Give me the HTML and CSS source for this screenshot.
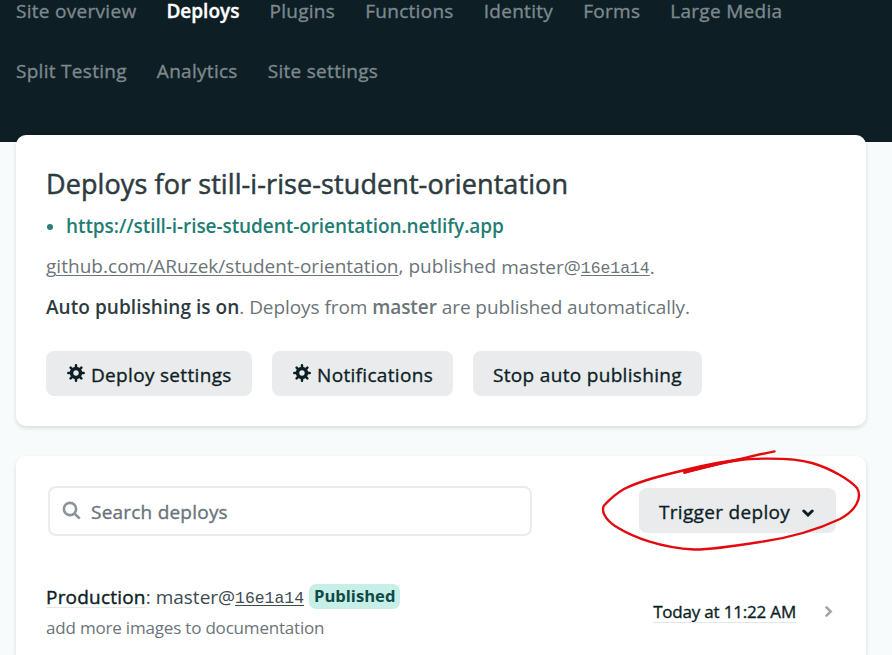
FILE: index.html
```
<!DOCTYPE html>
<html lang="en">
<head>
<meta charset="utf-8">
<title>Deploys</title>
<link rel="stylesheet" href="styles.css">
</head>
<body>
<header class="header">
  <nav class="nav">
    <div class="nav-row"><a>Site overview</a><a class="active">Deploys</a><a>Plugins</a><a>Functions</a><a>Identity</a><a>Forms</a><a>Large Media</a></div>
    <div class="nav-row"><a>Split Testing</a><a>Analytics</a><a>Site settings</a></div>
  </nav>
</header>
<main class="main">
  <section class="card summary">
    <h1 class="title">Deploys for still-i-rise-student-orientation</h1>
    <div class="site-link"><span class="dot"></span><a>https://still-i-rise-student-orientation.netlify.app</a></div>
    <p class="line repo"><a class="repo-link">github.com/ARuzek/student-orientation</a>, published <span class="branch">master@<span class="sha">16e1a14</span>.</span></p>
    <p class="line auto"><strong class="dark">Auto publishing is on</strong>. Deploys from <strong>master</strong> are published automatically.</p>
    <div class="buttons">
      <button class="btn settings"><svg class="gear" viewBox="-9 -9 18 18"><use href="#gear"/></svg><span>Deploy settings</span></button>
      <button class="btn notify"><svg class="gear" viewBox="-9 -9 18 18"><use href="#gear"/></svg><span>Notifications</span></button>
      <button class="btn stop"><span>Stop auto publishing</span></button>
    </div>
  </section>
  <section class="card list">
    <div class="toolbar">
      <div class="search">
        <svg class="glass" viewBox="0 0 20 20"><circle cx="8" cy="8" r="6.1"/><path d="M12.5 12.5L17.7 17.7"/></svg>
        <span>Search deploys</span>
      </div>
      <div class="trigger-wrap">
        <button class="btn trigger"><span>Trigger deploy</span><svg class="caret" viewBox="0 0 12 8"><path d="M1.8 2L6 6L10.2 2"/></svg></button>
        <svg class="mark" viewBox="590 440 302 120">
          <path d="M684.500 472.500C712 466 748 456.500 774.500 451.400"/>
          <path d="M684.500 472.500C715 464 735 460 750 459C775 458 800 459.500 812 463C832 469 850 480 857 488C863 498 855 511 840 519C819 529 795 537 760 542C735 546 710 549.700 694 549.500C662 548 634 538 615 526C605 519 601 511 604 505.500C611 498 617 493 624 489C640 481 660 476 685 470C705 465 722 461.500 740 459.500"/>
        </svg>
      </div>
    </div>
    <div class="deploy">
      <div class="deploy-info">
        <div class="deploy-title"><span class="prod"><b>Production</b>:</span><span class="branch">master@<span class="sha">16e1a14</span></span><span class="badge">Published</span></div>
        <div class="message">add more images to documentation</div>
      </div>
      <div class="deploy-time"><span>Today at 11:22 AM</span><svg class="chevron" viewBox="0 0 8 12"><path d="M1.500 1.500L6 6L1.500 10.500"/></svg></div>
    </div>
  </section>
</main>
<svg class="defs" width="0" height="0"><defs>
  <g id="gear">
    <path d="M0-7.700V7.700M-7.700 0H7.700M-5.400-5.400L5.400 5.400M5.400-5.400L-5.400 5.400" stroke="#0e1e25" stroke-width="2.500" stroke-linecap="round"/>
    <circle r="6.200" fill="#0e1e25"/><circle r="2.700" fill="#e9ebed"/>
  </g>
</defs></svg>
</body>
</html>
```
FILE: styles.css
```
* { box-sizing: border-box; }
body { margin: 0; height: 655px; overflow: hidden; background: #f8fbfc; font-family: "Open Sans", "Noto Sans", sans-serif; font-size: 19px; color: #6b7479; }
.header { height: 142px; background: #0e1e25; }
.nav { padding-left: 16px; }
.nav-row { display: flex; gap: 30px; height: 60px; line-height: 22px; letter-spacing: .29px; -webkit-text-stroke: .35px currentColor; color: #7d898d; white-space: nowrap; }
.nav-row .active { color: #fff; font-weight: 600; letter-spacing: 0; }
.main { margin-top: -7px; padding: 0 26px 0 16px; display: flex; flex-direction: column; gap: 30px; position: relative; }
.card { background: #fff; border-radius: 10px; box-shadow: 0 2px 4px rgba(14, 30, 37, .14); padding: 30px 30px 0; white-space: nowrap; }
.summary { height: 291px; }
.title { margin: 0 0 3px; font-size: 27px; line-height: 38px; font-weight: 400; letter-spacing: .09px; -webkit-text-stroke: .5px currentColor; color: #2d3b41; }
.site-link { display: flex; align-items: center; gap: 13px; height: 41px; line-height: 41px; color: #1f7d74; font-weight: 600; letter-spacing: -.08px; }
.dot { width: 6px; height: 6px; margin-left: 1px; border-radius: 50%; background: #2d7d78; }
.line { margin: 0; height: 41px; line-height: 41px; }
.repo { letter-spacing: .03px; margin-top: -1px; }
.auto { letter-spacing: -.07px; }
.repo-link { text-decoration: underline; text-decoration-thickness: 1px; text-underline-offset: 2px; }
.line strong { font-weight: 600; }
.auto .dark { color: #2d3b41; letter-spacing: .05px; }
.branch { position: relative; top: 1px; }
.sha { font-family: "Liberation Mono", monospace; font-size: 16.4px; letter-spacing: 0; text-decoration: underline; text-decoration-thickness: 1px; text-underline-offset: 2px; position: relative; top: -1px; }
.buttons { display: flex; gap: 20px; margin-top: 23px; }
.btn { display: flex; align-items: center; height: 45px; border: 0; padding: 4px 20px 0; border-radius: 8px; background: #e9ebed; color: #0e1e25; font: 400 19px/41px "Open Sans", "Noto Sans", sans-serif; letter-spacing: .32px; -webkit-text-stroke: .35px currentColor; white-space: nowrap; }
.settings { width: 206px; }
.notify { width: 181px; }
.stop { width: 229px; }
.gear { width: 18px; height: 18px; margin: -6px 6px 0 1px; flex: none; -webkit-text-stroke: 0; }
.list { height: 199px; border-radius: 10px 10px 0 0; }
.toolbar { display: flex; justify-content: space-between; align-items: flex-start; padding-left: 2px; }
.search { display: flex; align-items: center; width: 484px; height: 50px; padding: 2px 0 0 12px; border: 2px solid #e9ebed; border-radius: 8px; color: #68737a; letter-spacing: .22px; -webkit-text-stroke: .35px currentColor; }
.glass { width: 20px; height: 20px; margin: -2px 9px 0 0; fill: none; stroke: #8b9499; stroke-width: 2.6; }
.trigger-wrap { position: relative; margin-top: 2px; }
.trigger { width: 197px; }
.caret { width: 12px; height: 8px; margin-left: 12px; margin-top: 1px; fill: none; stroke: #0e1e25; stroke-width: 3; stroke-linecap: round; }
.mark { position: absolute; left: -49px; top: -48px; width: 302px; height: 120px; fill: none; stroke: #e20a0e; stroke-width: 2.4; stroke-linecap: round; pointer-events: none; }
.deploy { display: flex; justify-content: space-between; margin-top: 45px; }
.deploy-title { display: flex; align-items: baseline; height: 32px; line-height: 32px; color: #3d4a50; }
.prod b { font-weight: 400; letter-spacing: .2px; -webkit-text-stroke: .4px currentColor; color: #0e1e25; text-decoration: underline #e4e7e9 1px; text-underline-offset: 3px; }
.deploy-title .branch { margin-left: 5px; top: 0; }
.badge { position: relative; top: -2px; margin-left: 5px; height: 25px; line-height: 24px; padding: 0 5px; border-radius: 7px; background: #c8eee8; color: #0f4a45; font-weight: 700; font-size: 16.6px; }
.message { font-size: 17px; line-height: 30px; letter-spacing: -.19px; }
.deploy-time { display: flex; align-items: center; height: 60px; font-size: 17px; letter-spacing: -.19px; -webkit-text-stroke: .35px currentColor; color: #0e1e25; }
.deploy-time span { text-decoration: underline #e4e7e9 1px; text-underline-offset: 4px; }
.chevron { width: 9px; height: 13px; margin: 0 3px 0 28px; fill: none; stroke: #a0a6aa; stroke-width: 2.4; }
.defs { position: absolute; }
```
